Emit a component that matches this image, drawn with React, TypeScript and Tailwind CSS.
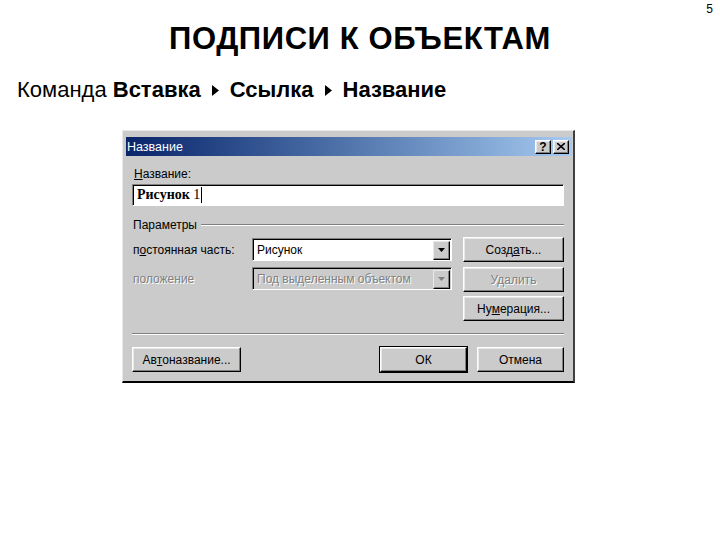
import React from "react";

const btn =
  "flex items-center justify-center bg-[#cbcbcb] border-t border-l border-t-white border-l-white border-b border-r border-b-black border-r-black shadow-[inset_-1px_-1px_0_#808080,inset_1px_1px_0_#e8e8e8] text-[12px]";

function Tri() {
  return (
    <svg width="7" height="11" viewBox="0 0 7 11" className="mx-[11px] shrink-0">
      <path d="M0 0 L7 5.5 L0 11 Z" fill="#000" />
    </svg>
  );
}

function DropArrow({ disabled }: { disabled?: boolean }) {
  return (
    <div className="w-[17px] h-[19px] flex items-center justify-center bg-[#cbcbcb] border-t border-l border-t-[#e8e8e8] border-l-[#e8e8e8] border-b border-r border-b-black border-r-black shadow-[inset_-1px_-1px_0_#808080]">
      <svg width="7" height="4" viewBox="0 0 7 4">
        <path d="M0 0 H7 L3.5 4 Z" fill={disabled ? "#808080" : "#000"} />
      </svg>
    </div>
  );
}

export default function App() {
  return (
    <div
      className="w-[720px] h-[540px] bg-white flex flex-col"
      style={{ fontFamily: '"Liberation Sans", Arial, sans-serif' }}
    >
      <div className="flex justify-end pr-[7px] pt-[2px] h-[16px] text-[12px] leading-[14px] text-black">
        5
      </div>
      <h1 className="text-center font-bold text-[31px] leading-[34px] mt-[6px] tracking-[0.6px] text-black">
        ПОДПИСИ К ОБЪЕКТАМ
      </h1>
      <div className="flex items-center pl-[17px] mt-[21px] text-[22px] leading-[26px] text-black">
        <span>Команда&nbsp;</span>
        <span className="font-bold">Вставка</span>
        <Tri />
        <span className="font-bold">Ссылка</span>
        <Tri />
        <span className="font-bold">Название</span>
      </div>

      {/* Dialog */}
      <div className="ml-[122px] mt-[27px] w-[453px] h-[253px] bg-[#cbcbcb] border-t border-l border-t-[#e8e8e8] border-l-[#e8e8e8] border-b-2 border-r-2 border-b-black border-r-[#404040] flex flex-col text-[12px] leading-[14px] text-black">
        {/* title bar */}
        <div className="mt-[6px] ml-[3px] mr-[1px] h-[19px] bg-linear-to-r from-[#0a246a] to-[#a6caf0] flex items-center justify-between pl-[1px] pr-[3px]">
          <span className="text-white text-[12.5px]">Название</span>
          <div className="flex gap-[2px]">
            <div className={btn + " w-[16px] h-[14px] text-[11px] font-bold leading-none text-black"}>?</div>
            <div className={btn + " w-[16px] h-[14px]"}>
              <svg width="8" height="7" viewBox="0 0 8 7">
                <path d="M0 0 L8 7 M8 0 L0 7" stroke="#000" strokeWidth="1.6" />
              </svg>
            </div>
          </div>
        </div>

        {/* body */}
        <div className="flex flex-col pl-[9px] pr-[9px] pt-[11px]">
          <div className="pl-[2px] h-[14px]">
            <span className="underline">Н</span>азвание:
          </div>
          <div className="mt-[3px] h-[22px] bg-white border-t border-l border-t-[#808080] border-l-[#808080] border-b border-r border-b-white border-r-white shadow-[inset_1px_1px_0_#000] flex items-center pl-[4px]">
            <span
              className="text-[14px] leading-[16px]"
              style={{ fontFamily: '"Liberation Serif", "Times New Roman", serif' }}
            >
              <b>Рисунок</b> 1
            </span>
            <span className="w-px h-[16px] bg-black ml-[1px]" />
          </div>

          <div className="mt-[12px] flex items-center h-[14px]">
            <span className="pl-[1px]">Параметры</span>
            <div className="flex-1 ml-[4px] border-t border-t-[#808080] border-b border-b-white" />
          </div>

          {/* row 1 */}
          <div className="mt-[5px] flex items-center h-[25px]">
            <span className="w-[120px] pl-[1px]">
              п<span className="underline">о</span>стоянная часть:
            </span>
            <div className="w-[200px] h-[23px] bg-white border-t border-l border-t-[#808080] border-l-[#808080] border-b border-r border-b-white border-r-white shadow-[inset_1px_1px_0_#000] flex items-center justify-between pl-[4px] pr-[1px] pt-px">
              <span>Рисунок</span>
              <DropArrow />
            </div>
            <div className={btn + " ml-[11px] w-[101px] h-[25px] text-black"}>
              Созд<span className="underline">а</span>ть...
            </div>
          </div>

          {/* row 2 */}
          <div className="mt-[5px] flex items-start h-[25px]">
            <span className="w-[120px] pl-[1px] mt-[5px] text-[#808080] [text-shadow:1px_1px_0_#fff]">
              положение
            </span>
            <div className="w-[200px] h-[23px] bg-[#cbcbcb] border-t border-l border-t-[#808080] border-l-[#808080] border-b border-r border-b-white border-r-white shadow-[inset_1px_1px_0_#000] flex items-center justify-between pl-[4px] pr-[1px] pt-px">
              <span className="text-[#808080] [text-shadow:1px_1px_0_#fff]">Под выделенным объектом</span>
              <DropArrow disabled />
            </div>
            <div className={btn + " ml-[11px] w-[101px] h-[25px] text-[#808080] [text-shadow:1px_1px_0_#fff]"}>
              Удалить
            </div>
          </div>

          {/* row 3 */}
          <div className="mt-[4px] flex justify-end">
            <div className={btn + " w-[101px] h-[25px] text-black"}>
              Ну<span className="underline">м</span>ерация...
            </div>
          </div>

          <div className="mt-[12px] border-t border-t-[#808080] border-b border-b-white" />

          <div className="mt-[12px] flex justify-between">
            <div className={btn + " w-[109px] h-[25px] text-black"}>
              Ав<span className="underline">т</span>оназвание...
            </div>
            <div className="flex gap-[10px]">
              <div className={btn + " w-[87px] h-[25px] outline outline-1 outline-black text-black"}>ОК</div>
              <div className={btn + " w-[87px] h-[25px] text-black"}>Отмена</div>
            </div>
          </div>
        </div>
      </div>
    </div>
  );
}
